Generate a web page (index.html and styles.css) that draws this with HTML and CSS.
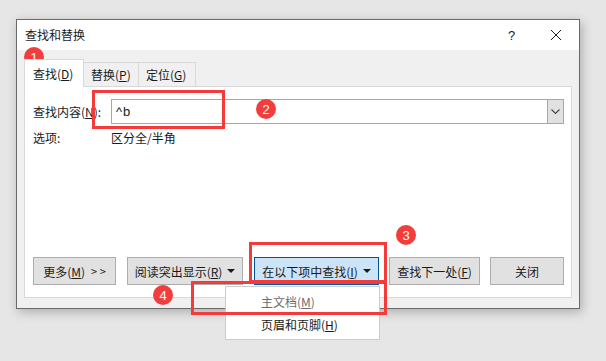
FILE: index.html
```html
<!DOCTYPE html>
<html lang="zh-CN">
<head>
<meta charset="utf-8">
<title>查找和替换</title>
<link rel="stylesheet" href="styles.css">
</head>
<body>
<div class="dialog">
  <div class="titlebar">
    <span class="title">查找和替换</span>
    <span class="help">?</span>
    <svg class="close" width="12" height="12" viewBox="0 0 12 12"><path d="M1 1 L11 11 M11 1 L1 11" stroke="#1a1a1a" stroke-width="1" fill="none"/></svg>
  </div>
  <div class="body">
    <div class="tabs">
      <div class="tab active">查找(<u>D</u>)</div>
      <div class="tab">替换(<u>P</u>)</div>
      <div class="tab">定位(<u>G</u>)</div>
    </div>
    <div class="panel">
      <div class="row find-row">
        <label class="label">查找内容(<u>N</u>):</label>
        <div class="combo">
          <span class="combo-text">^b</span>
          <span class="combo-btn"><svg width="9" height="5" viewBox="0 0 9 5"><path d="M0.5 0.5 L4.5 4.5 L8.5 0.5" stroke="#444" stroke-width="1.1" fill="none"/></svg></span>
        </div>
      </div>
      <div class="row opt-row">
        <span class="label">选项:</span>
        <span class="opt-value">区分全/半角</span>
      </div>
      <div class="buttons">
        <button class="btn btn-more">更多(<u>M</u>) <span class="gt">&gt; &gt;</span></button>
        <button class="btn btn-read">阅读突出显示(<u>R</u>) <svg class="tri" width="8" height="4" viewBox="0 0 8 4"><path d="M0 0 H8 L4 4 Z" fill="#1a1a1a"/></svg></button>
        <button class="btn btn-in">在以下项中查找(<u>I</u>) <svg class="tri" width="8" height="4" viewBox="0 0 8 4"><path d="M0 0 H8 L4 4 Z" fill="#1a1a1a"/></svg></button>
        <button class="btn btn-next">查找下一处(<u>F</u>)</button>
        <button class="btn btn-close">关闭</button>
      </div>
    </div>
  </div>
</div>

<div class="menu">
  <div class="menu-item disabled">主文档(<u>M</u>)</div>
  <div class="menu-item">页眉和页脚(<u>H</u>)</div>
</div>

<div class="mark box2"></div>
<div class="mark box3"></div>
<div class="mark box4"></div>
<div class="badge b1">1</div>
<div class="badge b2">2</div>
<div class="badge b3">3</div>
<div class="badge b4">4</div>
</body>
</html>
```

FILE: styles.css
```css
html, body {
  margin: 0;
  padding: 0;
}
body {
  width: 606px;
  height: 361px;
  background: #e6e6e6;
  font-family: "Noto Sans CJK SC", "Noto Sans", sans-serif;
  font-size: 12px;
  color: #1a1a1a;
  position: relative;
  overflow: hidden;
}
u {
  text-decoration: underline;
  text-underline-offset: 1px;
}
.dialog {
  margin: 19px 0 0 16px;
  width: 562px;
  height: 288px;
  border: 1px solid #6a6a6a;
  background: #f0f0f0;
  box-shadow: 2px 3px 10px rgba(0, 0, 0, 0.25);
  display: flex;
  flex-direction: column;
}
.titlebar {
  height: 30px;
  background: #ffffff;
  display: flex;
  align-items: center;
  padding-left: 8px;
}
.title {
  flex: 1;
  line-height: 16px;
}
.help {
  width: 10px;
  margin-right: 32px;
  font-family: "Liberation Sans", sans-serif;
  font-size: 13px;
}
.close {
  margin-right: 17px;
}
.body {
  flex: 1;
  padding: 9px 7px 10px 7px;
  display: flex;
  flex-direction: column;
}
.tabs {
  display: flex;
  align-items: flex-end;
  height: 27px;
  position: relative;
  z-index: 1;
}
.tab {
  height: 24px;
  box-sizing: border-box;
  border: 1px solid #d9d9d9;
  border-bottom: none;
  background: #f0f0f0;
  padding: 0 7px;
  display: flex;
  align-items: center;
  line-height: 14px;
  margin-left: -1px;
}
.tab:first-child {
  margin-left: 0;
}
.tab.active {
  height: 28px;
  background: #ffffff;
  padding: 0 8px;
  margin-bottom: -1px;
  width: 60px;
}
.tab:nth-child(2) { width: 56px; }
.tab:nth-child(3) { width: 58px; }
.panel {
  flex: 1;
  background: #ffffff;
  border: 1px solid #d9d9d9;
  padding: 12px 7px 12px 8px;
  display: flex;
  flex-direction: column;
}
.row {
  display: flex;
  align-items: center;
}
.label {
  width: 78px;
}
.combo {
  flex: 1;
  height: 25px;
  box-sizing: border-box;
  border: 1px solid #a8a8a8;
  display: flex;
  align-items: stretch;
}
.combo-text {
  flex: 1;
  padding-left: 4px;
  display: flex;
  align-items: center;
  font-family: "Liberation Sans", sans-serif;
  font-size: 13px;
  letter-spacing: 1px;
}
.combo-btn {
  width: 15px;
  background: #e1e1e1;
  border-left: 1px solid #a8a8a8;
  display: flex;
  align-items: center;
  justify-content: center;
}
.opt-row {
  margin-top: 3px;
  height: 20px;
}
.buttons {
  margin-top: auto;
  display: flex;
  gap: 11px;
}
.btn {
  height: 28px;
  box-sizing: border-box;
  border: 1px solid #adadad;
  background: #e1e1e1;
  font-family: inherit;
  font-size: 12px;
  color: #1a1a1a;
  padding: 0;
  display: flex;
  align-items: center;
  justify-content: center;
  gap: 0;
}
.btn .tri {
  margin-left: 5px;
}
.gt {
  margin-left: 6px;
  font-size: 11px;
}
.btn-more { width: 83px; }
.btn-read { width: 116px; }
.btn-in {
  width: 125px;
  background: #cce4f7;
  border-color: #005499;
}
.btn-next { width: 91px; margin-left: -1px; }
.btn-close { width: 74px; margin-left: -1px; }

.menu {
  position: absolute;
  left: 225px;
  top: 286px;
  width: 155px;
  box-sizing: border-box;
  background: #ffffff;
  border: 1px solid #cccccc;
  padding: 3px 0 3px;
}
.menu-item {
  height: 23px;
  line-height: 23px;
  padding-left: 35px;
  color: #1a1a1a;
}
.menu-item.disabled {
  color: #6d6d6d;
}

.mark {
  position: absolute;
  border: 3px solid #f43b3b;
  box-sizing: border-box;
}
.box2 { left: 92px; top: 90px; width: 133px; height: 39px; }
.box3 { left: 249px; top: 242px; width: 138px; height: 41px; }
.box4 { left: 191px; top: 281px; width: 196px; height: 34px; }

.badge {
  position: absolute;
  width: 20px;
  height: 20px;
  border-radius: 50%;
  background: #f23d3d;
  color: #ffffff;
  font-family: "Liberation Sans", sans-serif;
  font-size: 13px;
  display: flex;
  align-items: center;
  justify-content: center;
}
.b1 { left: 24px; top: 47px; }
.b2 { left: 256px; top: 99px; }
.b3 { left: 396px; top: 225px; }
.b4 { left: 153px; top: 285px; }
```
